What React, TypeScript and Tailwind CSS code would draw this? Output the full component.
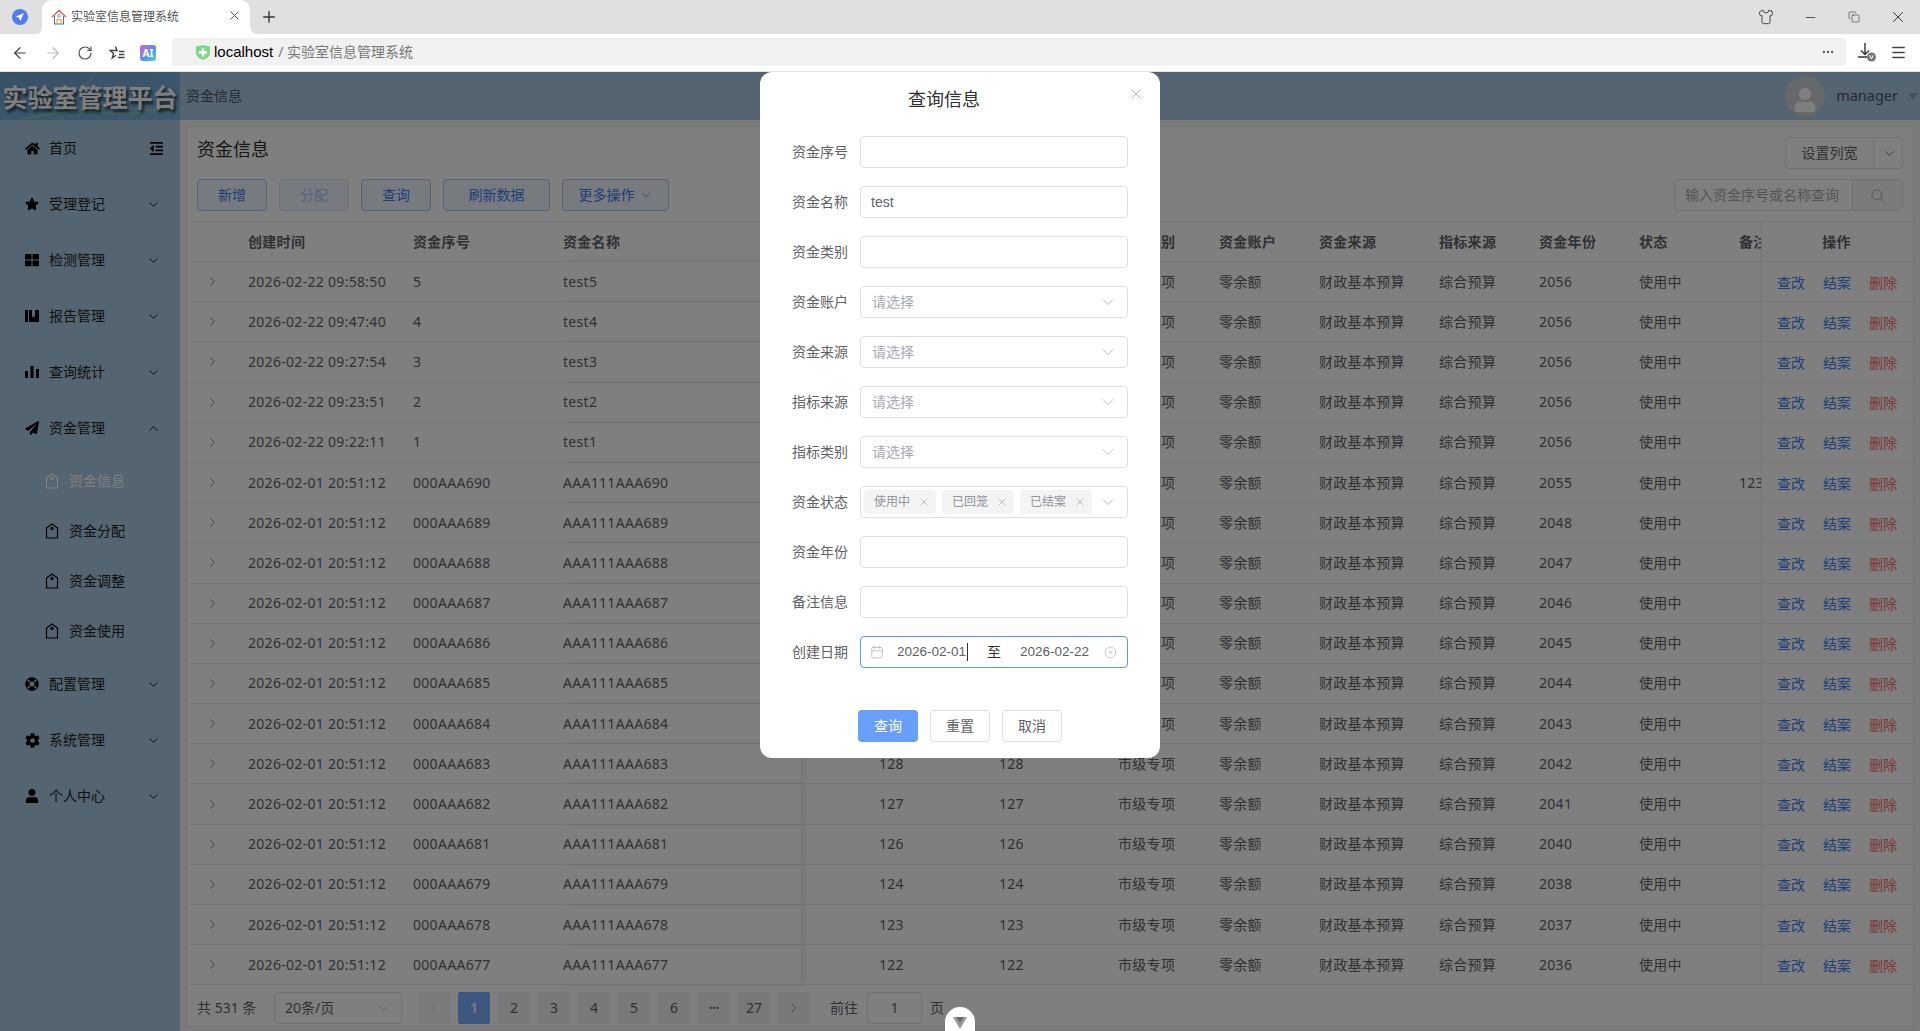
import { ChevronDown, ChevronRight, ChevronLeft, ChevronUp, X, Search, Calendar, CircleX, ArrowLeft, ArrowRight, RotateCw, Menu, Minus, Shirt, Copy, Plus, Ellipsis } from 'lucide-react'
import { FaHome, FaStar, FaThLarge, FaPaperPlane, FaLifeRing, FaCog, FaUser, FaOutdent } from 'react-icons/fa'

const rows = [
  ['2026-02-22 09:58:50', '5', 'test5', '', '', '2056', ''],
  ['2026-02-22 09:47:40', '4', 'test4', '', '', '2056', ''],
  ['2026-02-22 09:27:54', '3', 'test3', '', '', '2056', ''],
  ['2026-02-22 09:23:51', '2', 'test2', '', '', '2056', ''],
  ['2026-02-22 09:22:11', '1', 'test1', '', '', '2056', ''],
  ['2026-02-01 20:51:12', '000AAA690', 'AAA111AAA690', '135', '135', '2055', '123'],
  ['2026-02-01 20:51:12', '000AAA689', 'AAA111AAA689', '134', '134', '2048', ''],
  ['2026-02-01 20:51:12', '000AAA688', 'AAA111AAA688', '133', '133', '2047', ''],
  ['2026-02-01 20:51:12', '000AAA687', 'AAA111AAA687', '132', '132', '2046', ''],
  ['2026-02-01 20:51:12', '000AAA686', 'AAA111AAA686', '131', '131', '2045', ''],
  ['2026-02-01 20:51:12', '000AAA685', 'AAA111AAA685', '130', '130', '2044', ''],
  ['2026-02-01 20:51:12', '000AAA684', 'AAA111AAA684', '129', '129', '2043', ''],
  ['2026-02-01 20:51:12', '000AAA683', 'AAA111AAA683', '128', '128', '2042', ''],
  ['2026-02-01 20:51:12', '000AAA682', 'AAA111AAA682', '127', '127', '2041', ''],
  ['2026-02-01 20:51:12', '000AAA681', 'AAA111AAA681', '126', '126', '2040', ''],
  ['2026-02-01 20:51:12', '000AAA679', 'AAA111AAA679', '124', '124', '2038', ''],
  ['2026-02-01 20:51:12', '000AAA678', 'AAA111AAA678', '123', '123', '2037', ''],
  ['2026-02-01 20:51:12', '000AAA677', 'AAA111AAA677', '122', '122', '2036', ''],
]

function ReportIcon() {
  return (
    <svg width="14" height="14" viewBox="0 0 14 14" fill="currentColor">
      <path d="M0 1h3v12H0zM4 1h3v8l1.5-2L10 9V1h4v12H4z" />
    </svg>
  )
}

function StatsIcon() {
  return (
    <svg width="14" height="14" viewBox="0 0 14 14" fill="currentColor">
      <path d="M0 6h3v7H0zM5.500 1h3v12h-3zM11 4h3v9h-3z" />
    </svg>
  )
}

function TagIcon() {
  return (
    <svg width="14" height="16" viewBox="0 0 14 16" fill="none" stroke="currentColor" strokeWidth="1.2">
      <path d="M1.500 5 7 .9 12.500 5v10h-11z" strokeLinejoin="round" />
      <circle cx="7" cy="5.500" r="1.100" />
    </svg>
  )
}

function NavItem({ icon, label, open, toggle }: { icon: React.ReactNode; label: string; open?: boolean; toggle?: boolean }) {
  return (
    <div className="h-14 flex items-center pl-[25px] pr-[17px] text-[#222]">
      <span className="w-6 flex text-black">{icon}</span>
      <span className="text-sm flex-1">{label}</span>
      {toggle ? (
        <FaOutdent size={15} className="text-black mr-[-1px]" />
      ) : open ? (
        <ChevronUp size={15} strokeWidth={1.3} className="text-black mr-[2px]" />
      ) : (
        <ChevronDown size={15} strokeWidth={1.3} className="text-black mr-[2px]" />
      )}
    </div>
  )
}

function SubItem({ label, active }: { label: string; active?: boolean }) {
  return (
    <div className={`h-[50px] flex items-center pl-[45px] ${active ? 'text-white' : 'text-[#222]'}`}>
      <span className={`w-6 flex ${active ? 'text-white' : 'text-black'}`}>
        <TagIcon />
      </span>
      <span className="text-sm">{label}</span>
    </div>
  )
}

function Sidebar() {
  return (
    <div className="w-[180px] shrink-0 bg-[#a8c8e2]">
      <NavItem icon={<FaHome size={15} />} label="首页" toggle />
      <NavItem icon={<FaStar size={14} />} label="受理登记" />
      <NavItem icon={<FaThLarge size={14} />} label="检测管理" />
      <NavItem icon={<ReportIcon />} label="报告管理" />
      <NavItem icon={<StatsIcon />} label="查询统计" />
      <NavItem icon={<FaPaperPlane size={14} />} label="资金管理" open />
      <SubItem label="资金信息" active />
      <SubItem label="资金分配" />
      <SubItem label="资金调整" />
      <SubItem label="资金使用" />
      <NavItem icon={<FaLifeRing size={14} />} label="配置管理" />
      <NavItem icon={<FaCog size={15} />} label="系统管理" />
      <NavItem icon={<FaUser size={14} />} label="个人中心" />
    </div>
  )
}

function ToolButton({ label, wide, disabled, more }: { label: string; wide?: boolean; disabled?: boolean; more?: boolean }) {
  return (
    <button
      className={`h-8 rounded-[4px] border text-sm flex items-center justify-center gap-1 ${wide ? 'w-[107px]' : 'w-[70px]'} ${
        disabled ? 'bg-[#eef4ff] border-[#d6e4fc] text-[#a9c6f8]' : 'bg-[#eef4ff] border-[#a9c6f8] text-[#3f7fef]'
      }`}
    >
      {label}
      {more && <ChevronDown size={14} strokeWidth={1.3} />}
    </button>
  )
}

function TableRow({ row }: { row: string[] }) {
  return (
    <div className="h-[40.2px] shrink-0 flex border-b border-[#ebeef5] items-stretch text-sm text-[#606266]">
      <div className="w-[61px] flex items-center pl-[18px]">
        <ChevronRight size={15} strokeWidth={1.3} />
      </div>
      <div className="w-[165px] flex items-center">{row[0]}</div>
      <div className="w-[150px] flex items-center">{row[1]}</div>
      <div className="w-[239px] flex items-center border-r border-[#e4e7ed] shadow-[3px_0_6px_rgba(0,0,0,0.08)]">{row[2]}</div>
      <div className="w-[197px] flex items-center pl-[77px]">{row[3]}</div>
      <div className="w-[119px] flex items-center">{row[4]}</div>
      <div className="w-[101px] flex items-center">市级专项</div>
      <div className="w-[100px] flex items-center">零余额</div>
      <div className="w-[120px] flex items-center">财政基本预算</div>
      <div className="w-[100px] flex items-center">综合预算</div>
      <div className="w-[100px] flex items-center">{row[5]}</div>
      <div className="w-[100px] flex items-center">使用中</div>
      <div className="w-[22px] flex items-center overflow-hidden">{row[6]}</div>
      <div className="w-[150px] flex items-center gap-[18px] pl-[15px] pt-[2px] border-l border-[#e4e7ed] tracking-normal">
        <span className="text-[#3f7fef]">查改</span>
        <span className="text-[#3f7fef]">结案</span>
        <span className="text-[#f56c6c]">删除</span>
      </div>
    </div>
  )
}

function TableHead() {
  return (
    <div className="h-[41px] shrink-0 flex items-center border-y border-[#ebeef5] text-sm font-semibold text-[#606266]">
      <div className="w-[61px]" />
      <div className="w-[165px]">创建时间</div>
      <div className="w-[150px]">资金序号</div>
      <div className="w-[239px] h-full flex items-center border-r border-[#e4e7ed]">资金名称</div>
      <div className="w-[197px] pl-[77px]">资金总额</div>
      <div className="w-[119px]">资金余额</div>
      <div className="w-[101px]">资金类别</div>
      <div className="w-[100px]">资金账户</div>
      <div className="w-[120px]">资金来源</div>
      <div className="w-[100px]">指标来源</div>
      <div className="w-[100px]">资金年份</div>
      <div className="w-[100px]">状态</div>
      <div className="w-[22px] overflow-hidden whitespace-nowrap">备注</div>
      <div className="w-[150px] h-full flex items-center justify-center border-l border-[#e4e7ed]">操作</div>
    </div>
  )
}

function Pager() {
  const pages = ['1', '2', '3', '4', '5', '6', '•••', '27']
  return (
    <div className="h-9 flex items-center pl-[10px] text-sm text-[#606266]">
      <span className="w-[77px]">共 531 条</span>
      <div className="w-[128px] h-8 border border-[#dcdfe6] rounded-[4px] flex items-center justify-between pl-[10px] pr-[10px]">
        <span>20条/页</span>
        <ChevronDown size={15} strokeWidth={1.2} className="text-[#a8abb2]" />
      </div>
      <div className="ml-[16px] w-8 h-8 bg-[#f4f4f5] flex items-center justify-center rounded-[2px] text-[#c0c4cc]">
        <ChevronLeft size={14} strokeWidth={1.3} />
      </div>
      {pages.map((p) => (
        <div
          key={p}
          className={`ml-2 w-8 h-8 flex items-center justify-center rounded-[2px] ${
            p === '1' ? 'bg-[#7aaefc] text-white font-semibold' : 'bg-[#f0f2f5] text-[#606266]'
          } ${p === '•••' ? 'text-[9px]' : ''}`}
        >
          {p}
        </div>
      ))}
      <div className="ml-2 w-8 h-8 bg-[#f0f2f5] flex items-center justify-center rounded-[2px]">
        <ChevronRight size={14} strokeWidth={1.3} />
      </div>
      <span className="ml-5">前往</span>
      <div className="ml-[9px] w-[55px] h-8 border border-[#dcdfe6] rounded-[4px] flex items-center justify-center">1</div>
      <span className="ml-2">页</span>
    </div>
  )
}

function Card() {
  return (
    <div className="flex-1 m-[6px] mb-[5px] bg-white border border-[#e4e7ed] flex flex-col overflow-hidden">
      <div className="h-[94px] shrink-0 flex justify-between px-[10px] pt-[10px] [font-family:'Noto_Sans','Noto_Sans_CJK_SC',sans-serif]">
        <div className="flex flex-col gap-[18px]">
          <div className="h-6 flex items-center text-[18px] text-[#303133]">资金信息</div>
          <div className="flex gap-3">
            <ToolButton label="新增" />
            <ToolButton label="分配" disabled />
            <ToolButton label="查询" />
            <ToolButton label="刷新数据" wide />
            <ToolButton label="更多操作" wide more />
          </div>
        </div>
        <div className="flex flex-col gap-[10px] items-end">
          <div className="w-[118px] h-8 border border-[#dcdfe6] rounded-[4px] flex items-center text-sm text-[#606266]">
            <span className="w-[88px] text-center border-r border-[#dcdfe6] leading-[30px]">设置列宽</span>
            <ChevronDown size={15} strokeWidth={1.3} className="ml-2" />
          </div>
          <div className="w-[229px] h-8 border border-[#dcdfe6] rounded-[4px] flex items-center text-sm text-[#a8abb2]">
            <span className="w-[178px] pl-[10px] border-r border-[#dcdfe6] leading-[30px] h-full">输入资金序号或名称查询</span>
            <span className="flex-1 h-full bg-[#f5f7fa] flex items-center justify-center">
              <Search size={15} strokeWidth={1.2} className="text-[#909399]" />
            </span>
          </div>
        </div>
      </div>
      <div className="h-[769px] shrink-0 overflow-hidden flex flex-col [font-family:'Noto_Sans','Noto_Sans_CJK_SC',sans-serif] tracking-[0.3px]">
        <TableHead />
        {rows.map((r, i) => (
          <TableRow key={i} row={r} />
        ))}
      </div>
      <div className="[font-family:'Noto_Sans','Noto_Sans_CJK_SC',sans-serif]">
        <Pager />
      </div>
    </div>
  )
}

function Field({ label, children, focus }: { label: string; children?: React.ReactNode; focus?: boolean }) {
  return (
    <div className="h-8 flex items-center mb-[18px]">
      <label className="w-[88px] pr-3 text-right text-sm text-[#606266] shrink-0">{label}</label>
      <div
        className={`w-[268px] h-8 rounded-[4px] border flex items-center text-sm text-[#606266] ${
          focus ? 'border-[#6196f0]' : 'border-[#dcdfe6]'
        }`}
      >
        {children}
      </div>
    </div>
  )
}

function PickField({ label }: { label: string }) {
  return (
    <Field label={label}>
      <span className="pl-[11px] flex-1 text-[#a8abb2]">请选择</span>
      <ChevronDown size={20} strokeWidth={1} className="text-[#a8abb2] mr-[9px]" />
    </Field>
  )
}

function StatusTag({ label }: { label: string }) {
  return (
    <span className="w-[72px] h-6 bg-[#f4f4f5] rounded-[4px] text-xs text-[#909399] flex items-center pl-[10px] gap-[8px]">
      {label}
      <X size={12} strokeWidth={1.2} />
    </span>
  )
}

function QueryDialog() {
  return (
    <div className="absolute left-[760px] top-[72px] w-[400px] h-[686px] bg-white rounded-xl [font-family:'Liberation_Sans','Noto_Sans_CJK_SC',sans-serif]">
      <div className="relative h-16 pt-[16px] pr-[32px] text-center text-[18px] leading-6 text-[#303133]">
        查询信息
        <X size={16} strokeWidth={1.1} className="absolute right-[16px] top-[14px] text-[#909399]" />
      </div>
      <div className="pl-3">
        <Field label="资金序号" />
        <Field label="资金名称">
          <span className="pl-[10px]">test</span>
        </Field>
        <Field label="资金类别" />
        <PickField label="资金账户" />
        <PickField label="资金来源" />
        <PickField label="指标来源" />
        <PickField label="指标类别" />
        <Field label="资金状态">
          <div className="flex gap-[6px] pl-[3px] flex-1">
            <StatusTag label="使用中" />
            <StatusTag label="已回笼" />
            <StatusTag label="已结案" />
          </div>
          <ChevronDown size={20} strokeWidth={1} className="text-[#a8abb2] mr-[9px]" />
        </Field>
        <Field label="资金年份" />
        <Field label="备注信息" />
        <Field label="创建日期" focus>
          <Calendar size={14} strokeWidth={1.2} className="ml-[9px] text-[#a8abb2]" />
          <span className="ml-[13px] w-[71px] border-r border-[#303133] leading-[18px] text-[13.5px] whitespace-nowrap">2026-02-01</span>
          <span className="ml-[19px] text-[#303133]">至</span>
          <span className="ml-[19px] w-[84px] text-[13.5px] whitespace-nowrap">2026-02-22</span>
          <CircleX size={13} strokeWidth={1.1} className="text-[#a8abb2]" />
        </Field>
      </div>
      <div className="flex gap-3 pl-[98px] mt-[42px] text-sm">
        <button className="w-[60px] h-8 rounded-[4px] bg-[#679ffa] text-white">查询</button>
        <button className="w-[60px] h-8 rounded-[4px] border border-[#dcdfe6] text-[#606266]">重置</button>
        <button className="w-[60px] h-8 rounded-[4px] border border-[#dcdfe6] text-[#606266]">取消</button>
      </div>
    </div>
  )
}

function BrowserChrome() {
  return (
    <div className="shrink-0 [font-family:'Noto_Sans','Noto_Sans_CJK_SC',sans-serif]">
      <div className="h-[34px] bg-[#e0e0e0] flex items-center relative">
        <svg width="16" height="16" viewBox="0 0 16 16" className="ml-3">
          <circle cx="8" cy="8" r="8" fill="#4f7cf0" />
          <path d="M12 4 3.800 7.600l3.200 1.200L8.400 12z" fill="#fff" />
        </svg>
        <div className="relative ml-[14px] w-[208px] h-[34px] bg-white rounded-t-[10px] flex items-center pl-[9px]">
          <span className="absolute -left-[6px] bottom-0 w-[6px] h-[6px] bg-white">
            <span className="block w-full h-full bg-[#e0e0e0] rounded-br-[6px]" />
          </span>
          <span className="absolute -right-[8px] bottom-0 w-[8px] h-[8px] bg-white">
            <span className="block w-full h-full bg-[#e0e0e0] rounded-bl-[8px]" />
          </span>
          <svg width="16" height="16" viewBox="0 0 16 16" fill="none" className="mr-[4px]">
            <path d="M1 8 8 1.500 15 8" stroke="#e2574c" strokeWidth="1.3" />
            <path d="M3.500 7v8h9V7" stroke="#5a6b8c" strokeWidth="1.1" />
            <circle cx="8" cy="6.800" r="1.400" stroke="#6a9ce0" />
            <path d="M6 15v-4.500h4V15" stroke="#e8a83c" strokeWidth="1.2" />
          </svg>
          <span className="text-xs text-[#555] leading-none">实验室信息管理系统</span>
          <X size={15} strokeWidth={1.6} className="absolute right-[8px] top-[8px] text-[#555]" />
        </div>
        <Plus size={18} strokeWidth={1.8} className="ml-[10px] text-[#333]" />
        <Shirt size={16} strokeWidth={1.2} className="absolute left-[1758px] top-[9px] text-[#222]" />
        <Minus size={15} strokeWidth={1.2} className="absolute left-[1803px] top-[10px] text-[#222]" />
        <Copy size={12} strokeWidth={1.2} className="absolute left-[1848px] top-[11px] text-[#333]" />
        <X size={18} strokeWidth={1.2} className="absolute left-[1889px] top-[8px] text-[#222]" />
      </div>
      <div className="h-[38px] bg-white border-b border-[#e3e3e3] flex items-center relative">
        <ArrowLeft size={18} strokeWidth={1.6} className="ml-[11px] text-[#444]" />
        <ArrowRight size={18} strokeWidth={1.6} className="ml-[15px] text-[#bbb]" />
        <RotateCw size={16} strokeWidth={1.8} className="ml-[15px] text-[#555]" />
        <span className="ml-[16px] flex text-[#444]">
          <svg width="16" height="16" viewBox="0 0 16 16" fill="none" stroke="currentColor" strokeWidth="1.4">
            <path d="M6.500 1.500 8 5.500h-7l3.500 2.700L3.300 13l3.600-2.800M10 6.500h5.500M10 9.500h5.500M9 12.500h6.500" />
          </svg>
        </span>
        <span className="ml-[15px] w-4 h-4 rounded-[3px] bg-gradient-to-br from-[#e04fd0] via-[#4f8cf0] to-[#4fd0e8] text-white text-[10px] font-bold leading-4 text-center">
          AI
        </span>
        <div className="absolute left-[172px] top-[4px] w-[1674px] h-7 bg-[#f1f1f1] rounded-[4px] flex items-center pl-[24px]">
          <svg width="14" height="15" viewBox="0 0 14 15" className="mr-[4px]">
            <path d="M0 1.500 7 0l7 1.500V8c0 3.500-4 6-7 7-3-1-7-3.500-7-7z" fill="#7fd88a" />
            <path d="M5.800 3.500h2.400v2.800H11v2.400H8.200v2.800H5.800V8.700H3V6.300h2.800z" fill="#fff" />
          </svg>
          <span className="text-[15px] text-black [font-family:'Liberation_Sans',sans-serif]">localhost</span>
          <span className="ml-[5px] text-sm text-[#777]">/ 实验室信息管理系统</span>
          <Ellipsis size={14} strokeWidth={2} className="absolute right-[11px] top-[7px] text-[#555]" />
        </div>
        <svg width="20" height="20" viewBox="0 0 20 20" fill="none" className="absolute left-[1857px] top-[8px]">
          <path d="M8 1v11M4 8.500 8 12.500l4-4M1 15h9" stroke="#333" strokeWidth="1.4" />
          <circle cx="14.500" cy="15" r="4.500" fill="#777" />
          <path d="M12.800 13.300 14.500 17l1.700-3.700" stroke="#fff" strokeWidth="1" />
        </svg>
        <Menu size={17} strokeWidth={2} className="absolute left-[1890px] top-[10px] text-[#444]" />
      </div>
    </div>
  )
}

export default function App() {
  return (
    <div className="relative w-[1920px] h-[1031px] overflow-hidden flex flex-col bg-white">
      <BrowserChrome />
      <div className="flex-1 flex flex-col bg-[#f4f4f4] [font-family:'Noto_Sans','Noto_Sans_CJK_SC',sans-serif]">
        <div className="h-12 shrink-0 bg-[#a8c8e2] flex items-center">
          <div className="relative w-[180px] h-12 overflow-hidden bg-gradient-to-br from-[#70a0c8] to-[#7cb4e0] flex items-center justify-center text-[25px] font-bold leading-none text-white [text-shadow:2px_3px_3px_rgba(0,0,0,0.7)] [font-family:'Noto_Sans_CJK_SC',serif] whitespace-nowrap">
            <svg width="180" height="48" viewBox="0 0 180 48" fill="none" className="absolute inset-0">
              <path d="M20 48C70 36 120 34 180 40M60 48 96 0M80 38C110 42 140 44 170 34" stroke="#a8e080" strokeWidth="1" opacity="0.7" />
            </svg>
            <span className="relative">实验室管理平台</span>
          </div>
          <span className="ml-[6px] text-sm text-[#505256] flex-1">资金信息</span>
          <div className="w-10 h-10 rounded-full bg-[#cdd0d6] overflow-hidden flex items-end justify-center">
            <FaUser size={24} className="text-white mb-[4px]" />
          </div>
          <span className="ml-[11px] text-[14.500px] text-[#505256] leading-none pb-[2px]">manager</span>
          <span className="ml-[10px] mr-[2px] w-0 h-0 border-x-[5px] border-x-transparent border-t-[7px] border-t-[#88a0b8]" />
        </div>
        <div className="flex-1 flex min-h-0">
          <Sidebar />
          <Card />
        </div>
      </div>
      <div className="absolute left-0 right-0 top-[72px] bottom-0 bg-black/50" />
      <QueryDialog />
      <div className="absolute left-[945px] top-[1007px] w-[30px] h-[40px] rounded-full bg-white flex justify-center pt-[10px]">
        <svg width="14" height="12" viewBox="0 0 14 12">
          <path d="M0 0h14L7 12z" fill="#9a9a9a" />
          <path d="M3.500 0h7L7 6z" fill="#666" />
        </svg>
      </div>
    </div>
  )
}
